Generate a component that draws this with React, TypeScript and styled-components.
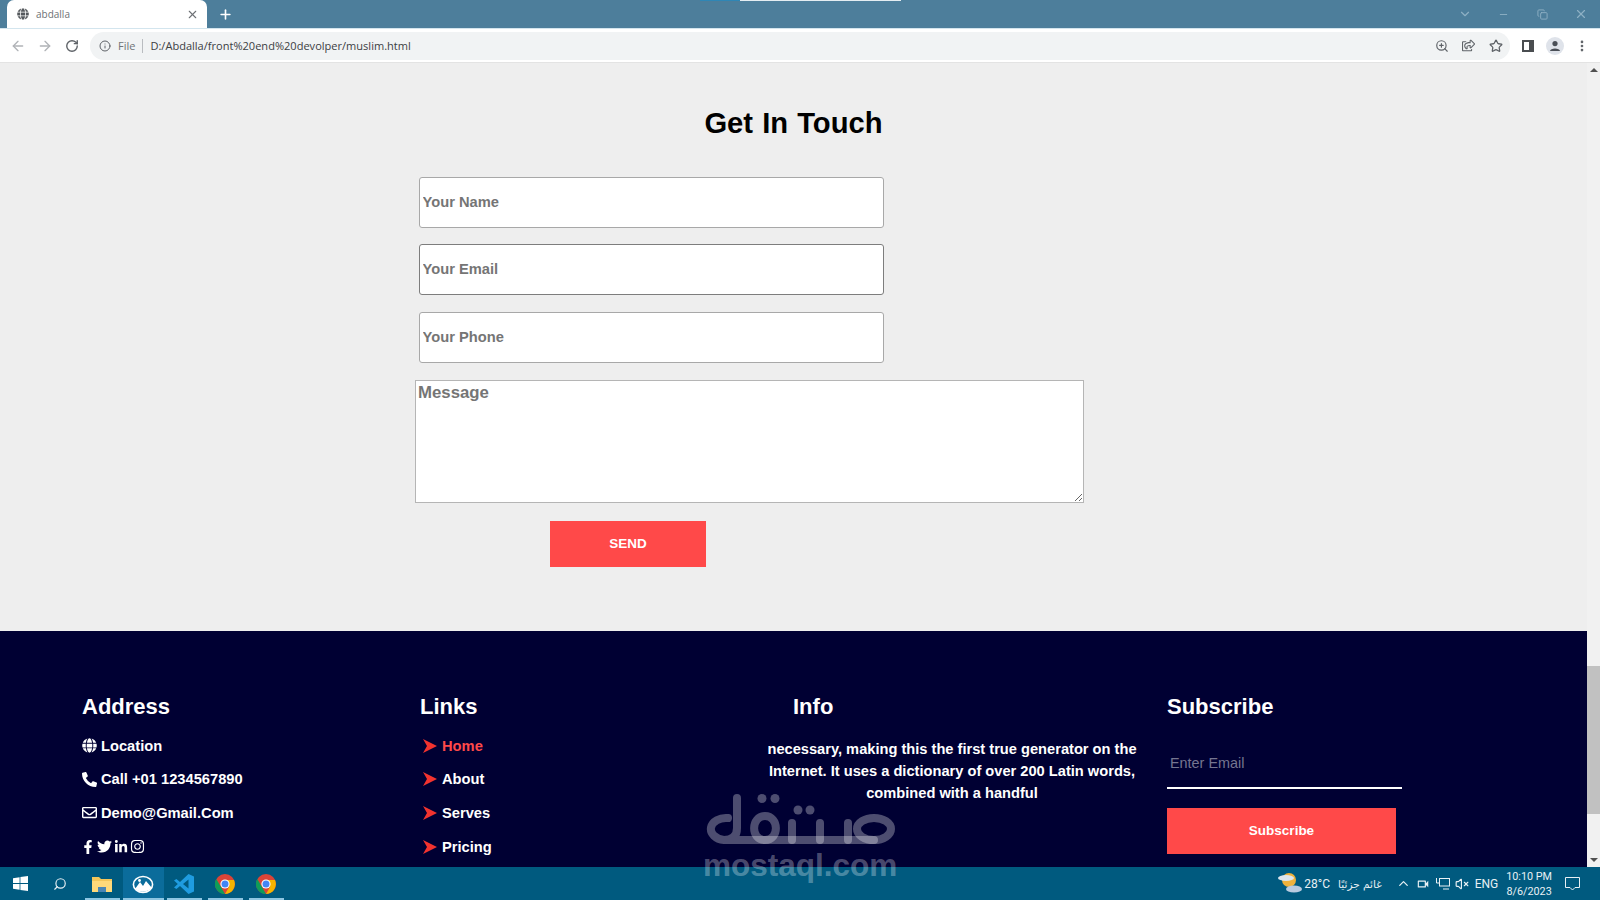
import React from 'react';
import styled, { createGlobalStyle } from 'styled-components';
import {
  FaFacebookF,
  FaGlobe,
  FaInstagram,
  FaLinkedinIn,
  FaPhoneAlt,
  FaRegEnvelope,
  FaRegShareSquare,
  FaTwitter,
} from 'react-icons/fa';
import { MdOutlineVideocam } from 'react-icons/md';
import {
  ArrowLeft,
  ArrowRight,
  ChevronDown,
  ChevronUp,
  Copy,
  Info,
  Minus,
  MoreVertical,
  Plus,
  RotateCw,
  Search,
  Star,
  VolumeX,
  X,
  ZoomIn,
} from 'lucide-react';

const GlobalStyle = createGlobalStyle`
  html, body {
    margin: 0;
    height: 100%;
    overflow: hidden;
  }
  * {
    box-sizing: border-box;
  }
  body {
    font-family: "Liberation Sans", Arial, sans-serif;
  }
`;

const Screen = styled.div`
  position: relative;
  width: 1600px;
  height: 900px;
  display: flex;
  flex-direction: column;
  overflow: hidden;
  background: #eeeeee;
`;

/* browser chrome */
const TabStrip = styled.div`
  position: relative;
  height: 28px;
  flex: none;
  display: flex;
  align-items: flex-end;
  padding-left: 7px;
  background: #4d7e9b;
  color: #fff;
`;

const TopGlitch = styled.div`
  position: absolute;
  top: 0;
  left: 700px;
  width: 201px;
  height: 1px;
  background: linear-gradient(to right, #2f86b5 0 40px, #e4edf2 40px);
`;

const Tab = styled.div`
  width: 200px;
  height: 28px;
  display: flex;
  align-items: center;
  padding: 0 8px 0 10px;
  background: #fff;
  border-radius: 7px 7px 0 0;
  color: #6d7175;
`;

const TabTitle = styled.span`
  flex: 1;
  margin-left: 7px;
  font-family: "Open Sans", sans-serif;
  font-size: 10px;
`;

const NewTab = styled.div`
  margin-left: 11px;
  height: 28px;
  display: flex;
  align-items: center;
`;

const WindowControls = styled.div`
  margin-left: auto;
  height: 28px;
  display: flex;
  align-items: center;
  color: #8eb0c4;
`;

const WindowButton = styled.div<{ $width: number }>`
  width: ${(p) => p.$width}px;
  display: flex;
  justify-content: center;
`;

const Toolbar = styled.div`
  height: 35px;
  flex: none;
  display: flex;
  align-items: center;
  padding-left: 4px;
  background: #fff;
  border-top: 1px solid #d3e5ee;
  border-bottom: 1px solid #e3e3e3;
  color: #5f6368;
`;

const NavButton = styled.div<{ $muted?: boolean }>`
  width: 27px;
  display: flex;
  justify-content: center;
  color: ${(p) => (p.$muted ? '#b0b3b7' : '#5f6368')};
`;

const Omnibox = styled.div`
  width: 1420px;
  height: 28px;
  margin-left: 5px;
  margin-right: 4px;
  display: flex;
  align-items: center;
  padding: 0 1px 0 9px;
  background: #f1f3f4;
  border-radius: 14px;
`;

const FileLabel = styled.span`
  margin-left: 7px;
  padding-right: 7px;
  border-right: 1px solid #b9bcc0;
  color: #6f7377;
  font-size: 11px;
  line-height: 14px;
  font-family: "Open Sans", sans-serif;
`;

const Url = styled.span`
  flex: 1;
  margin-left: 7px;
  color: #3c4043;
  font-size: 11.05px;
  font-family: "Open Sans", sans-serif;
`;

const OmniIcon = styled.div`
  width: 27px;
  display: flex;
  justify-content: center;
`;

const ToolIcon = styled.div`
  width: 27px;
  display: flex;
  justify-content: center;
  align-items: center;
`;

const PanelIcon = styled.div`
  width: 12px;
  height: 12px;
  border: 2px solid #4a4d50;
  border-right-width: 5px;
`;

const Avatar = styled.div`
  width: 18px;
  height: 18px;
  border-radius: 50%;
  background: #dfe3ea;
  display: flex;
  align-items: center;
  justify-content: center;
`;

/* page */
const Viewport = styled.div`
  position: relative;
  flex: 1;
  min-height: 0;
  display: flex;
  overflow: hidden;
`;

const Page = styled.div`
  flex: 1;
  min-width: 0;
`;

const Contact = styled.section`
  height: 568px;
  padding-top: 44px;
`;

const Title = styled.h2`
  margin: 0 0 36.7px;
  text-align: center;
  color: #000;
  font-size: 29.2px;
  line-height: 33px;
  font-weight: 700;
  word-spacing: 1px;
`;

const Form = styled.form`
  display: flex;
  flex-direction: column;
  align-items: flex-start;
  gap: 16.8px;
  margin-left: 415px;
`;

const TextField = styled.input<{ $dark?: boolean }>`
  width: 465px;
  height: 51px;
  margin-left: 4px;
  padding: 0 2.5px 1px;
  background: #fff;
  border: 1px solid ${(p) => (p.$dark ? '#7d7d7d' : '#a8a8a8')};
  border-radius: 3px;
  outline: none;
  font-family: inherit;
  font-size: 14.7px;
  font-weight: 700;

  &::placeholder {
    color: #757575;
    opacity: 1;
  }
`;

const MessageField = styled.textarea`
  width: 669px;
  height: 123px;
  padding: 2px;
  background: #fff;
  border: 1px solid #b5b5b5;
  outline: none;
  font-family: inherit;
  font-size: 16.8px;
  font-weight: 700;
  display: block;

  &::placeholder {
    color: #757575;
    opacity: 1;
  }
`;

const SendButton = styled.button`
  width: 156px;
  height: 46px;
  margin-left: 135px;
  margin-top: 1px;
  padding: 0 0 1px;
  border: 0;
  background: #ff4949;
  color: #fff;
  font-family: inherit;
  font-size: 13.5px;
  font-weight: 700;
`;

const Footer = styled.footer`
  height: 300px;
  padding: 62px 0 0 82px;
  display: grid;
  grid-template-columns: 338px 342px 405px 240px;
  align-content: start;
  background: #000033;
  color: #fff;
`;

const Column = styled.div<{ $indent?: number }>`
  h3 {
    padding-left: ${(p) => p.$indent ?? 0}px;
  }
`;

const ColumnTitle = styled.h3`
  margin: 0 0 8px;
  font-size: 22px;
  line-height: 28px;
  font-weight: 700;
`;

const Row = styled.div<{ $active?: boolean }>`
  height: 33.6px;
  display: flex;
  align-items: center;
  gap: 4px;
  font-size: 14.7px;
  font-weight: 700;
  color: ${(p) => (p.$active ? '#ff4949' : '#fff')};
`;

const LinkRow = styled(Row)`
  gap: 5px;
  padding-left: 3px;
`;

const Socials = styled.div`
  height: 33.6px;
  margin-left: -1px;
  display: flex;
  align-items: center;
  gap: 2px;
`;

const InfoText = styled.p`
  margin: 17px 0 0;
  padding-right: 25px;
  text-align: center;
  font-size: 14.65px;
  line-height: 22px;
  font-weight: 700;
`;

const EmailField = styled.input`
  display: block;
  width: 235px;
  height: 43px;
  margin: 24.5px 0 19px;
  padding: 0 3px 6px;
  background: transparent;
  border: 0;
  border-bottom: 2px solid #fff;
  outline: none;
  color: #fff;
  font-family: inherit;
  font-size: 14.4px;

  &::placeholder {
    color: #757590;
    opacity: 1;
  }
`;

const SubscribeButton = styled.button`
  display: block;
  width: 229px;
  height: 46px;
  border: 0;
  background: #ff4949;
  color: #fff;
  font-family: inherit;
  font-size: 13.5px;
  font-weight: 700;
`;

const Scrollbar = styled.div`
  width: 13px;
  flex: none;
  display: flex;
  flex-direction: column;
  background: #f1f1f1;
`;

const ScrollArrow = styled.div<{ $down?: boolean }>`
  height: 14px;
  flex: none;
  margin-top: ${(p) => (p.$down ? 'auto' : '0')};
  display: flex;
  align-items: center;
  justify-content: center;

  &::before {
    content: "";
    border-left: 4px solid transparent;
    border-right: 4px solid transparent;
    ${(p) => (p.$down ? 'border-top' : 'border-bottom')}: 4px solid #505050;
  }
`;

const ScrollThumb = styled.div`
  height: 148px;
  margin-top: 589px;
  background: #c1c1c1;
`;

const Watermark = styled.div`
  position: absolute;
  left: 703px;
  top: 794px;
  width: 193px;
  z-index: 5;
  color: rgba(255, 255, 255, 0.3);
  pointer-events: none;
`;

const WatermarkLogo = styled.svg`
  display: block;
  margin-left: 1px;
`;

const WatermarkText = styled.div`
  margin-top: 3px;
  text-align: center;
  font-size: 31.5px;
  line-height: 32px;
  font-weight: 700;
`;

/* taskbar */
const Taskbar = styled.div`
  height: 33px;
  flex: none;
  display: flex;
  align-items: stretch;
  background: #005a7f;
  color: #e8f0f4;
  font-family: Roboto, sans-serif;
  font-size: 12px;
`;

const TaskCell = styled.div<{ $width?: number; $active?: boolean; $open?: boolean }>`
  position: relative;
  width: ${(p) => p.$width ?? 41}px;
  display: flex;
  align-items: center;
  justify-content: center;
  background: ${(p) => (p.$active ? '#0b6c9b' : 'transparent')};

  &::after {
    content: "";
    display: ${(p) => (p.$open ? 'block' : 'none')};
    position: absolute;
    left: ${(p) => (p.$active ? 0 : 3)}px;
    right: ${(p) => (p.$active ? 0 : 3)}px;
    bottom: 0;
    height: 2px;
    background: #8ec6e2;
  }
`;

const Tray = styled.div`
  margin-left: auto;
  display: flex;
  align-items: center;
  padding-right: 20px;
`;

const TrayItem = styled.div<{ $gap: number }>`
  margin-left: ${(p) => p.$gap}px;
  display: flex;
  align-items: center;
`;

const WeatherText = styled(TrayItem)`
  font-family: "DejaVu Sans", sans-serif;
  font-size: 10.5px;
`;

const Clock = styled.div`
  margin-left: 8px;
  text-align: center;
  font-size: 10.8px;
  line-height: 15px;
`;

const MirroredSearch = styled(Search)`
  transform: scaleX(-1);
`;

const ChromeLogo = () => (
  <svg width="20" height="20" viewBox="0 0 20 20">
    <circle cx="10" cy="10" r="10" fill="#db4437" />
    <path d="M1.3 5 L6 13 L10 20 A10 10 0 0 1 1.3 5Z" fill="#0f9d58" />
    <path d="M10 6 H19 A10 10 0 0 1 10 20 L14 13Z" fill="#f4b400" />
    <circle cx="10" cy="10" r="4.6" fill="#fff" />
    <circle cx="10" cy="10" r="3.5" fill="#4285f4" />
  </svg>
);

const NavArrow = () => (
  <svg width="14" height="14" viewBox="0 0 14 14">
    <path d="M0 0 L14 7 L0 14 L4 7Z" fill="#f2332f" />
  </svg>
);

const links = ['Home', 'About', 'Serves', 'Pricing'];

export default function App() {
  return (
    <Screen>
      <GlobalStyle />

      <TabStrip>
        <TopGlitch />
        <Tab>
          <FaGlobe size={12} color="#55595d" />
          <TabTitle>abdalla</TabTitle>
          <X size={13} />
        </Tab>
        <NewTab>
          <Plus size={15} strokeWidth={2.6} />
        </NewTab>
        <WindowControls>
          <WindowButton $width={38}>
            <ChevronDown size={14} />
          </WindowButton>
          <WindowButton $width={39}>
            <Minus size={11} />
          </WindowButton>
          <WindowButton $width={39}>
            <Copy size={11} />
          </WindowButton>
          <WindowButton $width={38}>
            <X size={14} />
          </WindowButton>
        </WindowControls>
      </TabStrip>

      <Toolbar>
        <NavButton $muted>
          <ArrowLeft size={16} />
        </NavButton>
        <NavButton $muted>
          <ArrowRight size={16} />
        </NavButton>
        <NavButton>
          <RotateCw size={14} strokeWidth={2.4} />
        </NavButton>
        <Omnibox>
          <Info size={12} />
          <FileLabel>File</FileLabel>
          <Url>D:/Abdalla/front%20end%20devolper/muslim.html</Url>
          <OmniIcon>
            <ZoomIn size={14} />
          </OmniIcon>
          <OmniIcon>
            <FaRegShareSquare size={13} />
          </OmniIcon>
          <OmniIcon>
            <Star size={14} strokeWidth={2.2} />
          </OmniIcon>
        </Omnibox>
        <ToolIcon>
          <PanelIcon />
        </ToolIcon>
        <ToolIcon>
          <Avatar>
            <svg width="12" height="12" viewBox="0 0 12 12">
              <circle cx="6" cy="3.6" r="2.6" fill="#4a4f57" />
              <path d="M1 11 C1 7.6 11 7.6 11 11Z" fill="#4a4f57" />
            </svg>
          </Avatar>
        </ToolIcon>
        <ToolIcon>
          <MoreVertical size={14} strokeWidth={2.6} />
        </ToolIcon>
      </Toolbar>

      <Viewport>
        <Page>
          <Contact>
            <Title>Get In Touch</Title>
            <Form>
              <TextField placeholder="Your Name" readOnly />
              <TextField placeholder="Your Email" readOnly $dark />
              <TextField placeholder="Your Phone" readOnly />
              <MessageField placeholder="Message" readOnly />
              <SendButton type="button">SEND</SendButton>
            </Form>
          </Contact>

          <Footer>
            <Column>
              <ColumnTitle>Address</ColumnTitle>
              <Row>
                <FaGlobe size={15} />
                Location
              </Row>
              <Row>
                <FaPhoneAlt size={15} />
                Call +01 1234567890
              </Row>
              <Row>
                <FaRegEnvelope size={15} />
                Demo@Gmail.Com
              </Row>
              <Socials>
                <FaFacebookF size={14} />
                <FaTwitter size={15} />
                <FaLinkedinIn size={14} />
                <FaInstagram size={15} />
              </Socials>
            </Column>

            <Column>
              <ColumnTitle>Links</ColumnTitle>
              {links.map((link, index) => (
                <LinkRow key={link} $active={index === 0}>
                  <NavArrow />
                  {link}
                </LinkRow>
              ))}
            </Column>

            <Column $indent={31}>
              <ColumnTitle>Info</ColumnTitle>
              <InfoText>
                necessary, making this the first true generator on the Internet. It uses a
                dictionary of over 200 Latin words, combined with a handful
              </InfoText>
            </Column>

            <Column>
              <ColumnTitle>Subscribe</ColumnTitle>
              <EmailField placeholder="Enter Email" readOnly />
              <SubscribeButton type="button">Subscribe</SubscribeButton>
            </Column>
          </Footer>
        </Page>

        <Scrollbar>
          <ScrollArrow />
          <ScrollThumb />
          <ScrollArrow $down />
        </Scrollbar>
      </Viewport>

      <Watermark>
        <WatermarkLogo width="191" height="52" viewBox="0 0 191 52" fill="none" stroke="currentColor" strokeWidth="8" strokeLinecap="round">
          <path d="M33 4 V34 Q33 46 20 46 H170 M20 46 A15 11 0 1 1 24 24" />
          <path d="M61 46 C46 46 47 22 61 22 C75 22 76 46 61 46" />
          <path d="M88 46 Q88 46 88 29 M116 46 V29 M144 46 V29" />
          <ellipse cx="170" cy="35" rx="17" ry="11" />
          <g fill="currentColor" stroke="none">
            <circle cx="58" cy="4.5" r="4.5" />
            <circle cx="71" cy="4.5" r="4.5" />
            <circle cx="94" cy="16" r="4.5" />
            <circle cx="106" cy="16" r="4.5" />
          </g>
        </WatermarkLogo>
        <WatermarkText>mostaql.com</WatermarkText>
      </Watermark>

      <Taskbar>
        <TaskCell $width={40}>
          <svg width="15" height="15" viewBox="0 0 15 15" fill="#fff">
            <path d="M0 2.2 L6.6 1.2 V7 H0Z M7.4 1.1 L15 0 V7 H7.4Z M0 8 H6.6 V13.8 L0 12.8Z M7.4 8 H15 V15 L7.4 13.9Z" />
          </svg>
        </TaskCell>
        <TaskCell $width={40}>
          <MirroredSearch size={14} />
        </TaskCell>
        <TaskCell $width={1.5} />
        <TaskCell $open>
          <svg width="20" height="18" viewBox="0 0 20 18">
            <path d="M0 2 H7 L9 4 H20 V17 H0Z" fill="#f4c65a" />
            <rect x="0" y="6" width="20" height="11" fill="#ffd97a" />
            <rect x="6" y="12" width="8" height="5" fill="#4a86b5" />
          </svg>
        </TaskCell>
        <TaskCell $active $open>
          <svg width="22" height="20" viewBox="0 0 22 20" fill="none" stroke="#fff" strokeWidth="1.6">
            <ellipse cx="11" cy="10.5" rx="9.6" ry="8" />
            <path d="M3 15 L8 8 L11 12 L14 7 L20 14 Q11 21 3 15Z" fill="#fff" stroke="none" />
            <circle cx="7.5" cy="6.5" r="1.4" fill="#fff" stroke="none" />
          </svg>
        </TaskCell>
        <TaskCell $open>
          <svg width="20" height="20" viewBox="0 0 20 20" fill="#1f9ce0">
            <path d="M14.5 0 L20 2.6 V17.4 L14.5 20 L6 11.9 L2.4 15 L0 13.6 L3.8 10 L0 6.4 L2.4 5 L6 8.1Z M14.5 5.4 L9 10 L14.5 14.6Z" fillRule="evenodd" />
          </svg>
        </TaskCell>
        <TaskCell $open>
          <ChromeLogo />
        </TaskCell>
        <TaskCell $open>
          <ChromeLogo />
        </TaskCell>

        <Tray>
          <TrayItem $gap={0}>
            <svg width="26" height="22" viewBox="0 0 26 22">
              <circle cx="12" cy="7" r="7" fill="#f0b23c" />
              <ellipse cx="9" cy="5" rx="8" ry="3" fill="#dfe7ee" />
              <ellipse cx="17" cy="16" rx="8" ry="3.6" fill="#b9cbe0" />
            </svg>
          </TrayItem>
          <TrayItem $gap={1}>28°C</TrayItem>
          <WeatherText $gap={8} dir="rtl">
            غائم جزئيًا
          </WeatherText>
          <TrayItem $gap={14}>
            <ChevronUp size={15} />
          </TrayItem>
          <TrayItem $gap={5}>
            <MdOutlineVideocam size={14} />
          </TrayItem>
          <TrayItem $gap={6}>
            <svg width="14" height="13" viewBox="0 0 14 13" fill="none" stroke="#e8f0f4">
              <rect x="3.5" y="1.5" width="10" height="7.5" />
              <path d="M7 12 H13 M0.5 1 V6 H3" />
            </svg>
          </TrayItem>
          <TrayItem $gap={5}>
            <VolumeX size={14} />
          </TrayItem>
          <TrayItem $gap={6}>ENG</TrayItem>
          <Clock>
            10:10 PM
            <br />
            8/6/2023
          </Clock>
          <TrayItem $gap={13}>
            <svg width="15" height="14" viewBox="0 0 15 14" fill="none" stroke="#e8f0f4">
              <path d="M0.5 0.5 H14.5 V10.5 H10 L7.5 13 L5 10.5 H0.5Z" />
            </svg>
          </TrayItem>
        </Tray>
      </Taskbar>
    </Screen>
  );
}
